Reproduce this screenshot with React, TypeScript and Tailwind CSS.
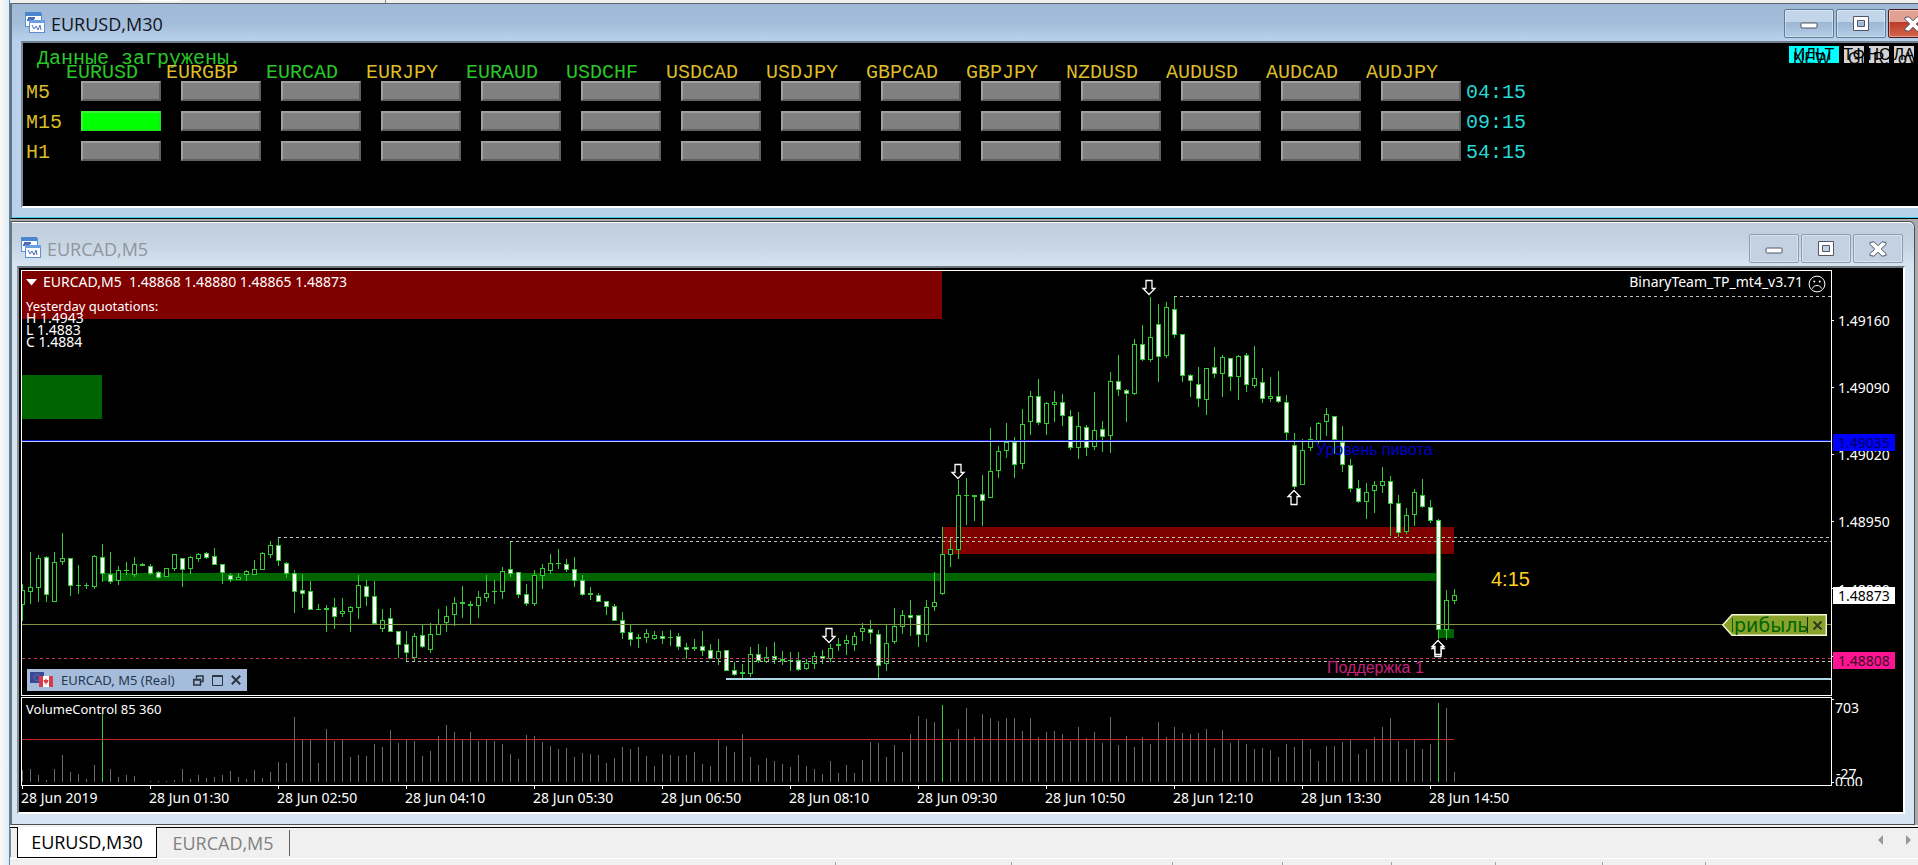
type Kind = "h" | "w" | "d";
type Candle = [high: number, top: number, bottom: number, low: number, kind: Kind];

const CHART_TOP = 271;
const BAR_STEP = 8;
const SIGNAL_BARS = [10, 115, 177];

const candles: Candle[] = [
  [584, 590, 605, 621, "h"], [552, 587, 592, 604, "h"], [555, 558, 588, 602, "h"], [556, 557, 595, 602, "w"],
  [552, 562, 602, 602, "h"], [533, 558, 562, 565, "h"], [558, 558, 586, 596, "w"], [565, 585, 586, 594, "d"],
  [583, 585, 586, 589, "d"], [555, 556, 587, 589, "h"], [544, 557, 574, 582, "w"], [552, 574, 582, 584, "w"],
  [566, 570, 581, 585, "h"], [562, 570, 571, 575, "d"], [557, 564, 575, 577, "h"], [563, 564, 566, 566, "d"],
  [564, 566, 574, 575, "w"], [571, 572, 578, 579, "w"], [568, 568, 577, 577, "h"], [554, 554, 569, 571, "h"],
  [558, 558, 570, 587, "w"], [556, 557, 569, 574, "h"], [553, 554, 559, 562, "h"], [552, 553, 558, 559, "w"],
  [548, 556, 565, 565, "w"], [564, 564, 573, 584, "w"], [573, 575, 580, 582, "w"], [573, 577, 580, 580, "h"],
  [570, 571, 575, 581, "h"], [560, 569, 575, 575, "h"], [552, 553, 570, 570, "h"], [541, 545, 555, 558, "h"],
  [537, 545, 561, 566, "w"], [562, 563, 574, 578, "w"], [570, 573, 592, 613, "w"], [574, 590, 594, 608, "w"],
  [581, 591, 610, 610, "w"], [604, 609, 610, 610, "d"], [605, 608, 610, 632, "d"], [598, 607, 617, 629, "w"],
  [598, 611, 614, 617, "h"], [606, 607, 612, 632, "h"], [575, 585, 608, 619, "h"], [580, 586, 597, 606, "w"],
  [581, 596, 624, 624, "w"], [609, 620, 629, 632, "h"], [608, 618, 632, 632, "w"], [631, 631, 645, 658, "w"],
  [631, 644, 653, 661, "w"], [633, 636, 658, 661, "h"], [624, 635, 647, 648, "w"], [623, 634, 650, 653, "h"],
  [609, 624, 635, 635, "h"], [606, 616, 623, 632, "h"], [597, 603, 615, 626, "h"], [586, 602, 604, 618, "d"],
  [601, 604, 606, 624, "w"], [591, 597, 606, 618, "h"], [575, 593, 598, 602, "h"], [580, 591, 592, 604, "d"],
  [567, 571, 592, 599, "h"], [541, 569, 574, 577, "w"], [572, 572, 595, 598, "w"], [584, 594, 604, 606, "w"],
  [570, 575, 604, 606, "h"], [564, 568, 576, 589, "h"], [554, 563, 571, 574, "h"], [549, 563, 564, 569, "d"],
  [559, 564, 570, 572, "w"], [557, 569, 581, 587, "w"], [575, 580, 595, 596, "w"], [587, 593, 595, 600, "w"],
  [593, 595, 602, 602, "w"], [601, 601, 607, 615, "w"], [604, 606, 621, 621, "w"], [612, 620, 633, 639, "w"],
  [625, 632, 640, 646, "w"], [634, 637, 639, 648, "d"], [629, 633, 638, 643, "h"], [631, 635, 639, 640, "h"],
  [631, 636, 639, 644, "w"], [630, 637, 638, 646, "d"], [633, 636, 647, 650, "w"], [643, 647, 650, 659, "w"],
  [639, 647, 649, 651, "d"], [631, 646, 651, 656, "w"], [644, 650, 659, 659, "w"], [639, 651, 659, 665, "h"],
  [650, 650, 671, 671, "w"], [662, 670, 675, 676, "w"], [664, 672, 674, 680, "d"], [647, 654, 674, 677, "h"],
  [644, 654, 661, 663, "w"], [647, 657, 662, 663, "h"], [642, 656, 660, 664, "w"], [651, 659, 661, 665, "d"],
  [652, 660, 661, 671, "d"], [652, 660, 670, 671, "w"], [659, 663, 669, 670, "h"], [652, 656, 664, 669, "h"],
  [650, 656, 659, 664, "w"], [644, 648, 659, 662, "h"], [638, 644, 646, 651, "d"], [635, 640, 644, 655, "h"],
  [632, 636, 645, 651, "h"], [623, 628, 632, 641, "h"], [620, 629, 633, 644, "w"], [630, 634, 666, 679, "w"],
  [625, 643, 664, 671, "h"], [608, 626, 642, 644, "h"], [610, 615, 627, 634, "h"], [600, 615, 618, 636, "w"],
  [615, 615, 635, 647, "w"], [600, 607, 635, 642, "h"], [572, 602, 607, 611, "h"], [527, 554, 594, 595, "h"],
  [537, 549, 555, 567, "h"], [480, 495, 550, 559, "h"], [478, 495, 496, 525, "d"], [495, 495, 497, 521, "d"],
  [475, 494, 501, 526, "w"], [428, 471, 498, 498, "h"], [446, 451, 471, 478, "h"], [423, 442, 451, 458, "h"],
  [437, 442, 465, 478, "w"], [409, 424, 464, 469, "h"], [391, 396, 422, 435, "h"], [379, 396, 423, 425, "w"],
  [402, 403, 424, 435, "h"], [391, 402, 405, 422, "h"], [394, 402, 416, 426, "w"], [410, 416, 448, 450, "w"],
  [412, 426, 448, 459, "h"], [425, 427, 448, 456, "w"], [392, 430, 447, 450, "h"], [421, 429, 437, 452, "w"],
  [372, 381, 436, 453, "h"], [355, 381, 390, 396, "w"], [389, 390, 394, 422, "w"], [339, 344, 394, 395, "h"],
  [325, 344, 360, 361, "w"], [297, 337, 360, 362, "h"], [304, 324, 357, 382, "w"], [302, 307, 356, 358, "h"],
  [296, 309, 335, 338, "w"], [334, 334, 376, 382, "w"], [374, 375, 381, 397, "w"], [367, 384, 399, 407, "w"],
  [368, 368, 400, 415, "h"], [347, 367, 374, 378, "w"], [355, 357, 374, 397, "h"], [358, 358, 377, 391, "w"],
  [355, 356, 377, 400, "h"], [353, 355, 385, 392, "w"], [346, 378, 386, 388, "h"], [368, 382, 399, 403, "w"],
  [377, 396, 399, 402, "h"], [371, 396, 402, 403, "w"], [395, 402, 433, 440, "w"], [433, 445, 487, 489, "w"],
  [439, 450, 485, 485, "h"], [427, 439, 448, 451, "h"], [422, 423, 442, 444, "h"], [408, 414, 422, 436, "h"],
  [416, 416, 440, 454, "w"], [426, 442, 465, 472, "w"], [459, 465, 489, 492, "w"], [480, 488, 502, 503, "w"],
  [483, 492, 502, 519, "h"], [481, 485, 491, 513, "h"], [467, 481, 486, 493, "h"], [476, 481, 504, 536, "w"],
  [495, 503, 533, 537, "w"], [508, 515, 532, 534, "h"], [489, 492, 515, 526, "h"], [479, 495, 507, 508, "w"],
  [500, 507, 521, 523, "w"], [519, 520, 630, 639, "w"], [590, 600, 630, 640, "h"], [589, 595, 601, 604, "h"],
];

const volumes = [
  12, 13, 7, 2, 13, 27, 10, 8, 3, 17, 69, 13, 5, 7, 6, 0, 1, 1, 1, 2, 13, 3, 7, 4, 5, 7, 11, 5, 3, 12,
  4, 10, 20, 19, 65, 42, 42, 19, 53, 41, 42, 25, 27, 26, 38, 35, 52, 39, 42, 41, 26, 31, 46, 57, 50, 42, 50, 41, 42, 41,
  38, 28, 23, 47, 46, 40, 36, 33, 34, 25, 29, 28, 27, 19, 24, 35, 33, 35, 26, 16, 28, 27, 26, 27, 30, 18, 16, 42, 36, 30,
  48, 25, 17, 24, 21, 18, 15, 27, 16, 13, 8, 21, 9, 17, 9, 22, 40, 39, 25, 37, 30, 48, 66, 63, 60, 77, 40, 53, 74, 45,
  68, 64, 61, 64, 64, 51, 64, 45, 50, 51, 48, 41, 55, 44, 50, 39, 65, 37, 46, 35, 45, 38, 60, 45, 55, 49, 48, 49, 53, 34,
  52, 39, 42, 38, 33, 34, 32, 25, 38, 35, 42, 33, 21, 36, 36, 40, 42, 28, 33, 45, 55, 64, 41, 33, 42, 33, 38, 79, 74, 10,
];

const pairs = [
  { name: "EURUSD", active: true },
  { name: "EURGBP", active: false },
  { name: "EURCAD", active: true },
  { name: "EURJPY", active: false },
  { name: "EURAUD", active: true },
  { name: "USDCHF", active: true },
  { name: "USDCAD", active: false },
  { name: "USDJPY", active: false },
  { name: "GBPCAD", active: false },
  { name: "GBPJPY", active: false },
  { name: "NZDUSD", active: false },
  { name: "AUDUSD", active: false },
  { name: "AUDCAD", active: false },
  { name: "AUDJPY", active: false },
];

const timeframes = [
  { name: "M5", left: "04:15", signal: "" },
  { name: "M15", left: "09:15", signal: "EURUSD" },
  { name: "H1", left: "54:15", signal: "" },
];

const filters = [
  { text: "ИЛЬТ", under: "NEW", style: "w-[50px] bg-[#00ffff]" },
  { text: "ТФ", under: "G(", style: "w-5 bg-[#d3d3d3]" },
  { text: "НС", under: "R.", style: "w-5 bg-[#d3d3d3]" },
  { text: "ЛА", under: "oV", style: "w-5 bg-[#d3d3d3]" },
];

const times = [
  "28 Jun 2019", "28 Jun 01:30", "28 Jun 02:50", "28 Jun 04:10", "28 Jun 05:30", "28 Jun 06:50",
  "28 Jun 08:10", "28 Jun 09:30", "28 Jun 10:50", "28 Jun 12:10", "28 Jun 13:30", "28 Jun 14:50",
];

const statusCells = [
  "w-[826px]", "w-[176px]", "w-[161px]", "w-[110px]", "w-[109px]", "w-[104px]", "w-[107px]", "w-[103px]",
];

export default function App() {
  return (
    <div className="flex min-h-screen bg-[#f0f0f0] font-['Open_Sans','Noto_Sans',sans-serif]">
      <div className="w-[9px] shrink-0 bg-linear-to-r from-[#f8f8f8] to-[#e8eaec]"></div>
      <main className="flex min-w-0 flex-1 flex-col overflow-hidden border-l border-[#3f8fc4] bg-[#ababab]">
        <div className="flex h-[3px] bg-[#f0f0f0]">
          <div className="w-[376px] border-r border-[#8a8a8a] pl-[130px]">
            <div className="h-px w-10 bg-white"></div>
          </div>
        </div>
        <SignalWindow></SignalWindow>
        <ChartWindow></ChartWindow>
        <WindowTabs></WindowTabs>
        <div className="flex h-[7px] border-t border-white bg-[#f0f0f0] pt-[3px]">
          {statusCells.map((cell) => (
            <div key={cell} className={`${cell} shrink-0 border-r border-[#a0a0a0]`}></div>
          ))}
        </div>
      </main>
    </div>
  );
}

function SignalWindow() {
  return (
    <section className="w-[calc(100%+32px)] border-t border-b border-l-2 border-t-[#5c6670] border-b-black border-l-[#66707a] bg-[#b9d1ea]">
      <div className="border-b border-[#3fd0ee] pb-[9px]">
        <TitleBar
          title="EURUSD,M30"
          bar="h-[37px] pl-3 pr-3 bg-linear-to-b from-[#9fb9d6] via-[#a3bcd9] to-[#b9d1ec]"
          text="text-[#10151c]"
          active
        ></TitleBar>
        <div className="relative mx-[9px] border-2 border-t-[#6f7f8f] border-r-white border-b-white border-l-[#7c8a98] bg-black pt-[5px] pb-[35px] pl-[3px] font-['Liberation_Mono',monospace] text-xl">
          <p className="h-[17px] pl-[11px] leading-[22px] text-[#28c828]">Данные загружены.</p>
          <SignalTable></SignalTable>
          <div className="absolute top-[3px] right-[25px] flex gap-[5px] font-['Liberation_Sans',sans-serif] text-base">
            {filters.map((filter) => (
              <button
                key={filter.text}
                type="button"
                className={`${filter.style} relative h-[17px] overflow-hidden text-center leading-[17px] text-black`}
              >
                <span className="flex justify-center">{filter.text}</span>
                <span className="absolute top-1 left-1">{filter.under}</span>
              </button>
            ))}
          </div>
        </div>
      </div>
    </section>
  );
}

function SignalTable() {
  return (
    <table className="w-[1500px] table-fixed border-collapse text-left">
      <thead>
        <tr className="h-4">
          <th className="w-10 p-0"></th>
          {pairs.map((pair) => (
            <th
              key={pair.name}
              scope="col"
              className={`w-[100px] p-0 font-normal leading-4 ${pair.active ? "text-[#28c828]" : "text-[#dcbc28]"}`}
            >
              {pair.name}
            </th>
          ))}
          <th className="w-[60px] p-0"></th>
        </tr>
      </thead>
      <tbody>
        {timeframes.map((frame) => (
          <tr key={frame.name} className="h-[30px] align-top">
            <th scope="row" className="p-0 font-normal leading-6 text-[#dcbc28]">
              {frame.name}
            </th>
            {pairs.map((pair) => (
              <td key={pair.name} className="p-0 pl-[15px]">
                <button
                  type="button"
                  aria-label={`${pair.name} ${frame.name}`}
                  className={`block h-5 w-20 border-2 ${
                    frame.signal === pair.name
                      ? "border-[#1ee61e] border-t-[#3cf03c] border-l-[#3cf03c] bg-[#00ff00]"
                      : "border-[#606060] border-t-[#a0a0a0] border-l-[#a0a0a0] bg-[#808080]"
                  }`}
                ></button>
              </td>
            ))}
            <td className="p-0 leading-6 text-[#28d8d8]">{frame.left}</td>
          </tr>
        ))}
      </tbody>
    </table>
  );
}

function ChartWindow() {
  return (
    <section className="mt-0.5 mr-[3px] rounded-tr-md border border-l-2 border-[#4a4f55] border-l-[#6d747c] bg-[#d7e4f2] pb-2.5">
      <TitleBar
        title="EURCAD,M5"
        bar="h-[44px] pt-[6px] pl-2 pr-[11px] rounded-tr-md border-t border-white bg-linear-to-b from-[#bfcddb] via-[#c7d4e2] to-[#d7e4f2]"
        text="text-[#8e959d]"
      ></TitleBar>
      <div className="mr-[9px] ml-[5px] border-2 border-t-[#6d7680] border-r-white border-b-white border-l-[#868e96] bg-black pt-0.5 pl-0.5 font-['Noto_Sans',sans-serif] text-sm text-white">
        <div className="grid grid-cols-[minmax(0,1fr)_71px]">
          <PricePane></PricePane>
          <PriceAxis></PriceAxis>
          <VolumePane></VolumePane>
          <VolumeAxis></VolumeAxis>
        </div>
        <svg className="block h-[26px] w-full fill-white" shapeRendering="crispEdges">
          {times.map((time, i) => (
            <g key={time}>
              <rect x={1 + i * 128} y="0" width="1" height="3"></rect>
              <text x={i * 128} y="17">{time}</text>
            </g>
          ))}
        </svg>
      </div>
    </section>
  );
}

function PricePane() {
  return (
    <div className="relative h-[426px] border border-white">
      <svg className="block h-full w-full" shapeRendering="crispEdges">
        <rect x="0" y="0" width="920" height="48" fill="#800000"></rect>
        <rect x="0" y="104" width="80" height="44" fill="#006400"></rect>
        <rect x="80" y="302" width="1336" height="8" fill="#006400"></rect>
        <rect x="920" y="256" width="512" height="27" fill="#800000"></rect>
        <rect x="1416" y="358" width="16" height="9" fill="#006400"></rect>
        <Candles></Candles>
        <rect x="0" y="169" width="100%" height="1" fill="#0a14c8"></rect>
        <rect x="0" y="170" width="100%" height="1" fill="#b8ccff"></rect>
        <rect x="0" y="353" width="100%" height="1" fill="#7f9440"></rect>
        <DashedLine x={1152} y={25} color="#c0c0c0"></DashedLine>
        <DashedLine x={256} y={266} color="#c0c0c0"></DashedLine>
        <DashedLine x={488} y={270} color="#c0c0c0"></DashedLine>
        <DashedLine x={0} y={387} color="#c8326e"></DashedLine>
        <DashedLine x={384} y={390} color="#c0c0c0"></DashedLine>
        <rect x="704" y="407" width="100%" height="2" fill="#add8e6"></rect>
        <Arrow x={807} y={357}></Arrow>
        <Arrow x={936} y={193}></Arrow>
        <Arrow x={1127} y={9}></Arrow>
        <Arrow x={1272} y={219} up></Arrow>
        <Arrow x={1416} y={371} up></Arrow>
        <Arrow x={1416} y={369} up></Arrow>
        <g className="font-['Liberation_Sans',sans-serif]">
          <text x="1294" y="184" fontSize="16" fill="#0000c8">Уровень пивота</text>
          <text x="1305" y="402" fontSize="16" fill="#c8207c">Поддержка 1</text>
          <text x="1469" y="315" fontSize="20" fill="#ffd21e">4:15</text>
        </g>
      </svg>
      <div className="absolute top-0 left-1 leading-3">
        <p className="flex h-[22px] items-center">
          <svg className="mr-1.5 h-[7px] w-[11px] fill-white">
            <path d="M0 0h11L5.5 6.500z"></path>
          </svg>
          <span className="whitespace-pre">EURCAD,M5  1.48868 1.48880 1.48865 1.48873</span>
        </p>
        <p className="mt-[7px] text-[13px] leading-3">Yesterday quotations:</p>
        <p>H 1.4943</p>
        <p>L 1.4883</p>
        <p>C 1.4884</p>
      </div>
      <div className="absolute top-0 right-[5px] flex h-[22px] items-center gap-[5px]">
        BinaryTeam_TP_mt4_v3.71
        <svg width="18" height="18" viewBox="0 0 18 18" fill="none" stroke="white" className="mt-1">
          <circle cx="9" cy="9" r="7.900"></circle>
          <circle cx="6.300" cy="6.500" r="1" fill="white" stroke="none"></circle>
          <circle cx="11.700" cy="6.500" r="1" fill="white" stroke="none"></circle>
          <path d="M4.500 13.500C5.500 9.500 12.500 9.500 13.500 13.500"></path>
        </svg>
      </div>
      <ProfitTag></ProfitTag>
      <MiniWindow></MiniWindow>
    </div>
  );
}

function Candles() {
  return (
    <g transform={`translate(0 ${-CHART_TOP})`}>
      {candles.map(([high, top, bottom, low, kind], i) => {
        const x = i * BAR_STEP;

        return (
          <g key={i}>
            <rect x={x} y={high} width="1" height={low - high} fill="#32cd32"></rect>
            <rect x={x - 2} y={top} width="5" height={bottom - top} fill="#32cd32"></rect>
            {kind !== "d" && bottom - top > 2 && (
              <rect
                x={x - 1}
                y={top + 1}
                width="3"
                height={bottom - top - 2}
                fill={kind === "w" ? "#ffffff" : "#000000"}
              ></rect>
            )}
          </g>
        );
      })}
    </g>
  );
}

function DashedLine({ x, y, color }: { x: number; y: number; color: string }) {
  return <line x1={x} y1={y + 0.5} x2="100%" y2={y + 0.5} stroke={color} strokeDasharray="3 3"></line>;
}

function Arrow({ x, y, up }: { x: number; y: number; up?: boolean }) {
  return (
    <path
      transform={up ? `translate(${x} ${y + 15}) scale(1 -1)` : `translate(${x} ${y})`}
      d="M-3 .5H3V8.500H6L0 14.500L-6 8.500H-3Z"
      fill="#000000"
      stroke="#ffffff"
      strokeWidth="1.300"
      shapeRendering="auto"
    ></path>
  );
}

function ProfitTag() {
  return (
    <div className="absolute top-[343px] right-1 h-[22px] w-[105px]">
      <svg className="absolute inset-0" width="105" height="22">
        <path d="M.7 11L10 .7H104.300V21.300H10Z" fill="#88a22c" stroke="#f4f8d8" strokeWidth="1.400"></path>
      </svg>
      <div className="relative flex h-full items-center pl-2.5 text-[#006400]">
        <span className="mr-px h-[14px] w-px bg-[#006400]"></span>
        <span className="w-[73px] overflow-hidden font-['DejaVu_Sans',sans-serif] text-[19px] leading-5">рибыль</span>
        <span className="h-4 w-px bg-[#203010]"></span>
        <button type="button" aria-label="Close" className="ml-[5px]">
          <svg width="9" height="9" stroke="#2e3a20" strokeWidth="2">
            <path d="M.5 .5L8.500 8.500M8.500 .5L.5 8.500"></path>
          </svg>
        </button>
      </div>
    </div>
  );
}

function MiniWindow() {
  return (
    <div className="absolute bottom-1 left-[5px] flex h-[22px] w-[220px] items-center bg-[#a5bddb] pl-[3px] text-[13px] text-[#26364e]">
      <svg width="24" height="16" className="mr-[7px] shrink-0">
        <rect x="0" y="0" width="14" height="11" fill="#3c4894"></rect>
        <circle cx="7" cy="5.500" r="3" fill="none" stroke="#8c94b8" strokeDasharray="1 1"></circle>
        <rect x="9" y="4" width="14" height="11" fill="#ffffff"></rect>
        <rect x="9" y="4" width="4" height="11" fill="#d83c44"></rect>
        <rect x="19" y="4" width="4" height="11" fill="#d83c44"></rect>
        <path d="M16 6.500l1 1.500 1.500 0-.7 2.500-1.300.5v1.500h-1v-1.500l-1.300-.5-.7-2.500 1.500 0z" fill="#d83c44"></path>
      </svg>
      EURCAD, M5 (Real)
      <div className="absolute right-1.5 flex items-center gap-2">
        <button type="button" aria-label="Restore">
          <svg width="11" height="11" fill="none" stroke="#2a3442" strokeWidth="1.500">
            <path d="M3.500 3.500V1H10V6.500H8M.8 4.500H7.500V10H.8ZM.8 5H7.500"></path>
          </svg>
        </button>
        <button type="button" aria-label="Maximize">
          <svg width="11" height="11" fill="none" stroke="#2a3442">
            <path d="M.5 .5H10.500V10.500H.5ZM.5 1.500H10.500"></path>
          </svg>
        </button>
        <button type="button" aria-label="Close">
          <svg width="10" height="10" fill="none" stroke="#2a3442" strokeWidth="2">
            <path d="M.8 .8L9.200 9.200M9.200 .8L.8 9.200"></path>
          </svg>
        </button>
      </div>
    </div>
  );
}

function PriceAxis() {
  return (
    <svg className="block h-[426px] w-[71px] fill-white" shapeRendering="crispEdges">
      <text x="6" y="56">1.49160</text>
      <text x="6" y="123">1.49090</text>
      <text x="6" y="190">1.49020</text>
      <text x="6" y="257">1.48950</text>
      <text x="6" y="325">1.48880</text>
      <path d="M0 50h2v1h-2zM0 117h2v1h-2zM0 184h2v1h-2zM0 251h2v1h-2zM0 318h2v1h-2zM0 386h2v1h-2z"></path>
      <rect x="1" y="164" width="62" height="17" fill="#0000ff"></rect>
      <text x="6" y="178" fill="#000058">1.49035</text>
      <rect x="1" y="317" width="62" height="17" fill="#ffffff"></rect>
      <text x="6" y="331" fill="#000000">1.48873</text>
      <rect x="1" y="382" width="62" height="17" fill="#ff1493"></rect>
      <text x="6" y="396" fill="#3c0c28">1.48808</text>
    </svg>
  );
}

function VolumePane() {
  return (
    <div className="relative mt-px h-[89px] border border-white">
      <svg className="block h-full w-full" shapeRendering="crispEdges">
        {volumes.map((volume, i) => (
          <rect
            key={i}
            x={i * BAR_STEP}
            y={84 - volume}
            width="1"
            height={volume}
            fill={SIGNAL_BARS.includes(i) ? "#32cd32" : "#696969"}
          ></rect>
        ))}
        <rect x="0" y="41" width="1432" height="1" fill="#c42424"></rect>
      </svg>
      <p className="absolute top-[5px] left-1 text-[13px] leading-3">VolumeControl 85 360</p>
    </div>
  );
}

function VolumeAxis() {
  return (
    <svg className="mt-px block h-[89px] w-[71px] fill-white" shapeRendering="crispEdges">
      <rect x="0" y="2" width="2" height="1"></rect>
      <rect x="0" y="85" width="2" height="1"></rect>
      <text x="3" y="16">703</text>
      <text x="4" y="82">-27</text>
      <text x="3" y="90">0.00</text>
    </svg>
  );
}

function WindowTabs() {
  return (
    <nav className="mt-0.5 flex h-[31px] border-t border-black bg-[#f0f0f0] text-lg shadow-[0_-2px_0_#f4f4f4]">
      <div className="my-px w-[7px] border-l border-[#8a8a8a]"></div>
      <button
        type="button"
        className="-mt-px h-[31px] w-[140px] border border-t-0 border-black bg-white leading-7 text-black"
      >
        EURUSD,M30
      </button>
      <button type="button" className="my-0.5 w-[133px] border-r border-[#606060] leading-6 text-[#808080]">
        EURCAD,M5
      </button>
      <div className="ml-auto flex items-center gap-[23px] pr-[7px] pb-1.5">
        <button type="button" aria-label="Scroll left">
          <svg width="5" height="10" fill="#9a9a9a">
            <path d="M5 0V10L0 5Z"></path>
          </svg>
        </button>
        <button type="button" aria-label="Scroll right">
          <svg width="5" height="10" fill="#9a9a9a">
            <path d="M0 0V10L5 5Z"></path>
          </svg>
        </button>
      </div>
    </nav>
  );
}

const titleButton =
  "flex h-[29px] w-[50px] items-center justify-center rounded-xs border shadow-[inset_0_0_0_1px_#ffffff60]";

type TitleBarProps = { title: string; bar: string; text: string; active?: boolean };

function TitleBar({ title, bar, text, active }: TitleBarProps) {
  const look = active
    ? "border-[#5f7a99] bg-linear-to-b from-[#c3d5e9] from-45% via-[#9cb6d3] via-45% to-[#b4cce6]"
    : "border-[#8d9bb0] bg-[#c3d1e2]";
  const closeLook = active
    ? "border-[#4a1d1d] bg-linear-to-b from-[#e0a094] from-45% via-[#b93a24] via-45% to-[#d4664e]"
    : look;

  return (
    <header className={`${bar} flex items-start`}>
      <WindowIcon></WindowIcon>
      <h2 className={`${text} mt-2 ml-[6px] text-lg leading-6`}>{title}</h2>
      <div className="mt-[5px] ml-auto flex gap-0.5">
        <button type="button" aria-label="Minimize" className={`${look} ${titleButton}`}>
          <svg width="18" height="8" className="mt-1">
            <rect x="1" y="1" width="16" height="5" rx="1" fill="#ffffff" stroke="#535666"></rect>
          </svg>
        </button>
        <button type="button" aria-label="Maximize" className={`${look} ${titleButton}`}>
          <svg width="18" height="16" stroke="#535666">
            <path d="M1.500 .5H16.500V14.500H1.500ZM5.500 4.500V10.500H12.500V4.500Z" fill="#ffffff" fillRule="evenodd"></path>
          </svg>
        </button>
        <button type="button" aria-label="Close" className={`${closeLook} ${titleButton}`}>
          <svg width="20" height="16">
            <path
              d="M2 1.500L6 .8L10 4.800L14 .8L18 1.500V3.500L13.200 8L18 12.500V14.500L14 15.200L10 11.200L6 15.200L2 14.500V12.500L6.800 8L2 3.500Z"
              fill="#ffffff"
              stroke="#535666"
            ></path>
          </svg>
        </button>
      </div>
    </header>
  );
}

function WindowIcon() {
  return (
    <svg width="21" height="21" className="mt-2 shrink-0" shapeRendering="crispEdges">
      <rect x="1" y="1" width="16" height="13" fill="#ffffff" stroke="#5a8fd4"></rect>
      <rect x="1" y="0" width="16" height="4" fill="#4a86d0"></rect>
      <path d="M3 8h2v-2h2v2h2v-2h2" fill="none" stroke="#4a6fb8" strokeWidth="1.500"></path>
      <rect x="5.500" y="8.500" width="15" height="12" fill="#ffffff" stroke="#5a8fd4"></rect>
      <rect x="5" y="8" width="16" height="3" fill="#6aa0e0"></rect>
      <path
        d="M8 13L10 17L12 14L14 18L16 13L17 18"
        fill="none"
        stroke="#4a6fb8"
        shapeRendering="auto"
      ></path>
    </svg>
  );
}
